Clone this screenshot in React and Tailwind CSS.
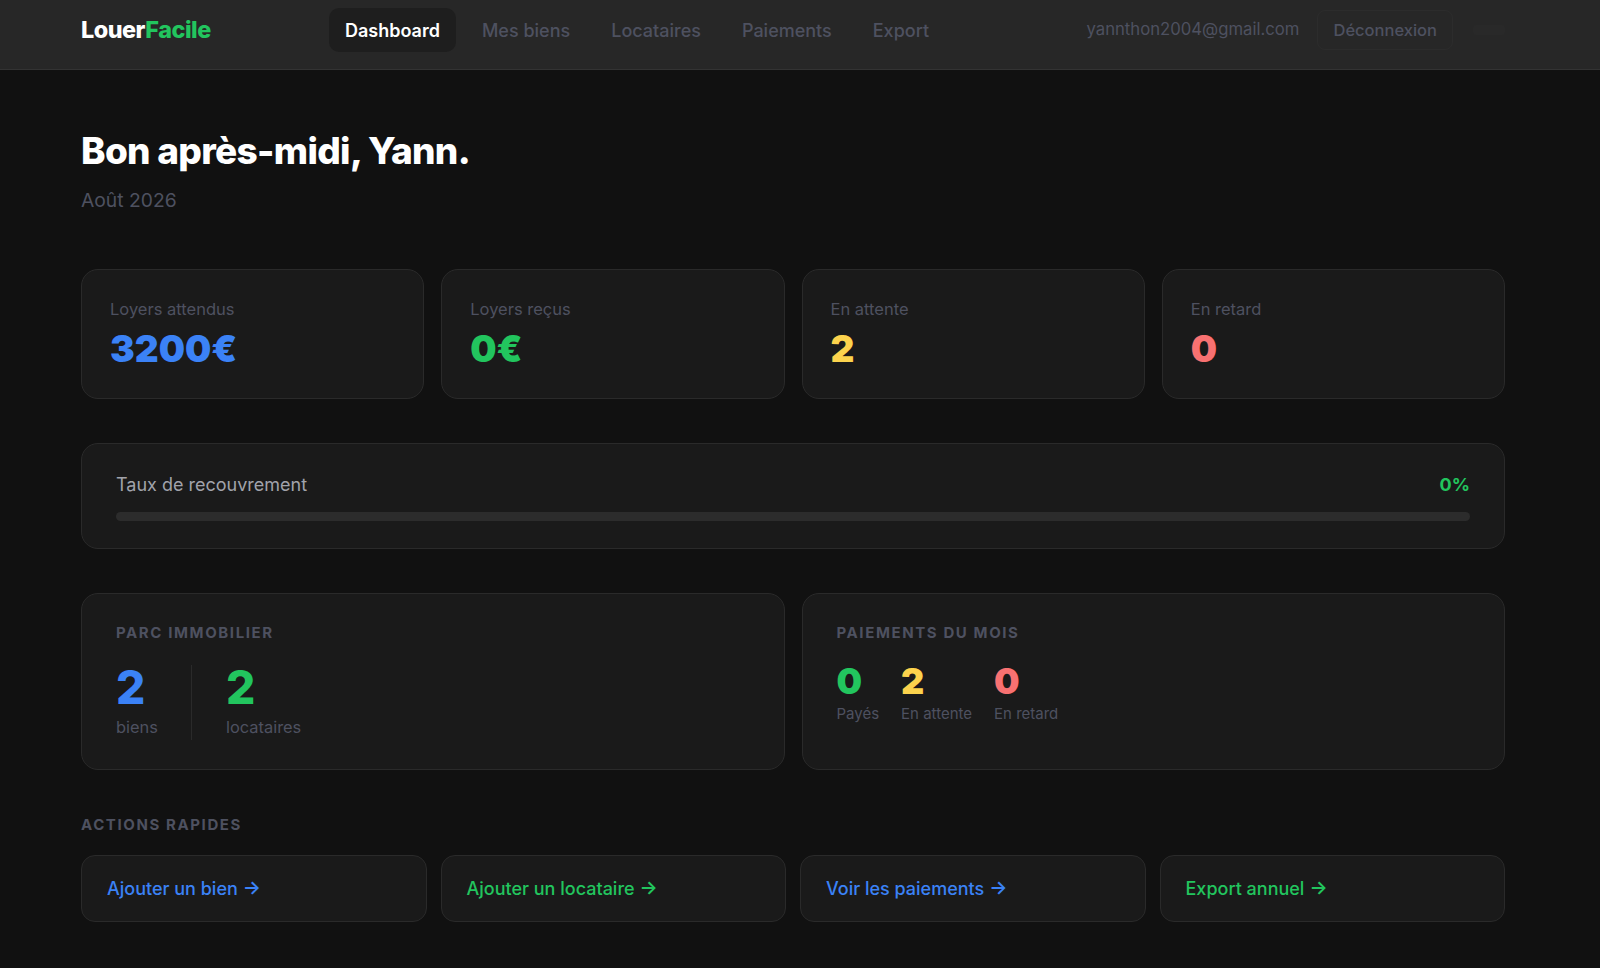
const sans = 'font-["Inter","Liberation_Sans",sans-serif]';

const NAV = ['Dashboard', 'Mes biens', 'Locataires', 'Paiements', 'Export'];

const STATS = [
  { label: 'Loyers attendus', value: '3200€', color: 'text-[#3b82f6]' },
  { label: 'Loyers reçus', value: '0€', color: 'text-[#22c55e]' },
  { label: 'En attente', value: '2', color: 'text-[#fcd34d]' },
  { label: 'En retard', value: '0', color: 'text-[#f87171]' },
];

const PAYMENTS = [
  { value: '0', label: 'Payés', color: 'text-[#22c55e]' },
  { value: '2', label: 'En attente', color: 'text-[#fcd34d]' },
  { value: '0', label: 'En retard', color: 'text-[#f87171]' },
];

const ACTIONS = [
  { label: 'Ajouter un bien', color: 'text-[#3b82f6]' },
  { label: 'Ajouter un locataire', color: 'text-[#22c55e]' },
  { label: 'Voir les paiements', color: 'text-[#3b82f6]' },
  { label: 'Export annuel', color: 'text-[#22c55e]' },
];

function Header() {
  return (
    <header className="h-[70px] shrink-0 flex items-center pl-[81px] pr-[95px] pb-[9px] bg-[#272727] border-b border-[#333333]">
      <div className="w-[248px] text-[23.4px] font-extrabold tracking-[-0.5px] text-white">
        Louer<span className="text-[#22c55e]">Facile</span>
      </div>
      <nav className="flex items-center gap-[11px]">
        {NAV.map((item, i) => (
          <a
            key={item}
            className={
              i === 0
                ? 'h-[44px] flex items-center px-[16px] rounded-[10px] bg-[#1e1e1e] text-white text-[18px] font-semibold'
                : 'h-[44px] flex items-center px-[15px] text-[#4e5160] text-[18px] font-medium'
            }
          >
            {item}
          </a>
        ))}
      </nav>
      <div className="ml-auto flex items-center">
        <span className="text-[#4e5160] text-[16.7px] mr-[18px]">yannthon2004@gmail.com</span>
        <button className="h-[40px] px-[15px] mr-[20px] rounded-[8px] border border-[#2c2c2c] text-[#4e5160] text-[16.5px] font-medium">
          Déconnexion
        </button>
        {/* barely visible control at the far right of the bar */}
        <div className="w-[32px] h-[10px] rounded-[3px] bg-[#292929]" />
      </div>
    </header>
  );
}

function StatCard({ label, value, color }) {
  return (
    <div className="h-[130px] px-[28px] pt-[27px] rounded-[17px] bg-[#1a1a1a] border border-[#2a2a2a]">
      <div className="text-[16.5px] leading-[24px] text-[#4e5160]">{label}</div>
      <div className={`mt-[5px] text-[37px] leading-[46px] font-black ${color}`}>{value}</div>
    </div>
  );
}

export default function App() {
  return (
    <div className={`${sans} h-[968px] flex flex-col bg-[#111111] overflow-hidden`}>
      <Header />
      <main className="pl-[81px] pr-[95px]">
        <h1 className="mt-[58px] text-[37px] leading-[46px] font-extrabold tracking-[-0.7px] text-white">
          Bon après-midi, Yann.
        </h1>
        <p className="mt-[13px] text-[19.3px] leading-[26px] text-[#4e5160]">Août 2026</p>

        <section className="mt-[56px] grid grid-cols-4 gap-[17px]">
          {STATS.map((s) => (
            <StatCard key={s.label} {...s} />
          ))}
        </section>

        <section className="mt-[44px] h-[106px] px-[34px] pt-[27px] rounded-[17px] bg-[#1a1a1a] border border-[#2a2a2a]">
          <div className="flex items-center justify-between h-[26px]">
            <span className="text-[18px] text-[#a1a3ab]">Taux de recouvrement</span>
            <span className="text-[18px] font-bold text-[#22c55e]">0%</span>
          </div>
          <div className="mt-[15px] h-[9px] rounded-full bg-[#2c2c2c]" />
        </section>

        <section className="mt-[44px] grid grid-cols-2 gap-[17px]">
          <div className="h-[177px] px-[34px] pt-[29px] rounded-[17px] bg-[#1a1a1a] border border-[#2a2a2a]">
            <div className="text-[15px] leading-[20px] font-bold tracking-[1.6px] text-[#4e5160]">PARC IMMOBILIER</div>
            <div className="mt-[22px] flex">
              <div className="w-[76px] h-[75px] border-r border-[#2a2a2a]">
                <div className="text-[46px] leading-[44px] font-extrabold text-[#3b82f6]">2</div>
                <div className="mt-[6px] text-[16.4px] leading-[24px] text-[#4e5160]">biens</div>
              </div>
              <div className="ml-[34px]">
                <div className="text-[46px] leading-[44px] font-extrabold text-[#22c55e]">2</div>
                <div className="mt-[6px] text-[16.4px] leading-[24px] text-[#4e5160]">locataires</div>
              </div>
            </div>
          </div>
          <div className="h-[177px] px-[34px] pt-[29px] rounded-[17px] bg-[#1a1a1a] border border-[#2a2a2a]">
            <div className="text-[15px] leading-[20px] font-bold tracking-[1.6px] text-[#4e5160]">PAIEMENTS DU MOIS</div>
            <div className="mt-[18px] flex gap-[22px]">
              {PAYMENTS.map((p) => (
                <div key={p.label}>
                  <div className={`text-[36px] leading-[40px] font-black ${p.color}`}>{p.value}</div>
                  <div className="mt-[2px] text-[15px] leading-[22px] text-[#4e5160]">{p.label}</div>
                </div>
              ))}
            </div>
          </div>
        </section>

        <h2 className="mt-[45px] text-[15px] leading-[20px] font-bold tracking-[1.6px] text-[#4e5160]">ACTIONS RAPIDES</h2>
        <section className="mt-[20px] grid grid-cols-4 gap-[14px]">
          {ACTIONS.map((a) => (
            <a
              key={a.label}
              className={`h-[67px] flex items-center gap-[5px] px-[25px] rounded-[14px] bg-[#1a1a1a] border border-[#2a2a2a] text-[18px] font-medium ${a.color}`}
            >
              {a.label}
              <span className="text-[19px] font-semibold">→</span>
            </a>
          ))}
        </section>
      </main>
    </div>
  );
}
